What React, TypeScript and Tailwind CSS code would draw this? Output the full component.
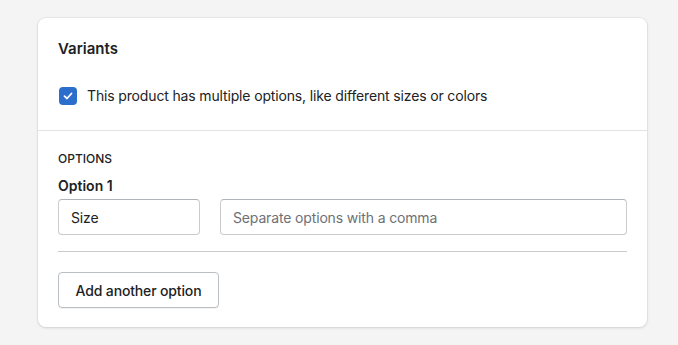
import React from "react";

export default function App() {
  return (
    <div className="min-h-[345px] w-[678px] bg-[#f4f4f4] pt-[18px] pl-[38px] pr-[31px]" style={{ fontFamily: "Inter, 'Noto Sans', sans-serif" }}>
      <div className="w-[609px] h-[309px] rounded-[8px] bg-white shadow-[0_0_0_1px_rgba(63,63,68,0.05),0_1px_3px_0_rgba(63,63,68,0.15)] text-[#202223] tracking-[-0.15px]">
        <div className="px-[20px] pt-[20px] pb-[24px]">
          <h2 className="text-[15px] font-semibold leading-[20px] h-[20px] mt-[1px] tracking-normal">Variants</h2>
          <label className="mt-[27px] flex items-center gap-[10px]">
            <span className="w-[18px] h-[18px] rounded-[4px] bg-[#2c6ecb] flex items-center justify-center ml-[1px]">
              <svg width="12" height="12" viewBox="0 0 12 12" fill="none">
                <path d="M2.5 6.2 L5 8.5 L9.5 3.5" stroke="white" strokeWidth="1.8" strokeLinecap="round" strokeLinejoin="round" />
              </svg>
            </span>
            <span className="text-[14px] leading-[20px]">This product has multiple options, like different sizes or colors</span>
          </label>
        </div>
        <div className="border-t border-[#e1e3e5]" />
        <div className="px-[20px] pt-[20px]">
          <div className="text-[12px] font-medium leading-[16px] tracking-normal">OPTIONS</div>
          <div className="mt-[9px] text-[14px] font-semibold leading-[20px] tracking-normal">Option 1</div>
          <div className="mt-[3px] flex gap-[20px]">
            <div className="w-[142px] h-[36px] rounded-[4px] border border-[#c9cccf] border-t-[#aeb4b9] flex items-center px-[12px] text-[14px]">Size</div>
            <div className="flex-1 h-[36px] rounded-[4px] border border-[#c9cccf] border-t-[#aeb4b9] flex items-center px-[12px] text-[14px] text-[#6d7175]">Separate options with a comma</div>
          </div>
          <div className="mt-[16px] border-t border-[#c9cccf]" />
          <button className="mt-[20px] h-[36px] w-[161px] rounded-[4px] border border-[#babfc3] bg-white text-[14px] font-medium text-[#202223] shadow-[0_1px_0_rgba(0,0,0,0.05)]">Add another option</button>
        </div>
      </div>
    </div>
  );
}
